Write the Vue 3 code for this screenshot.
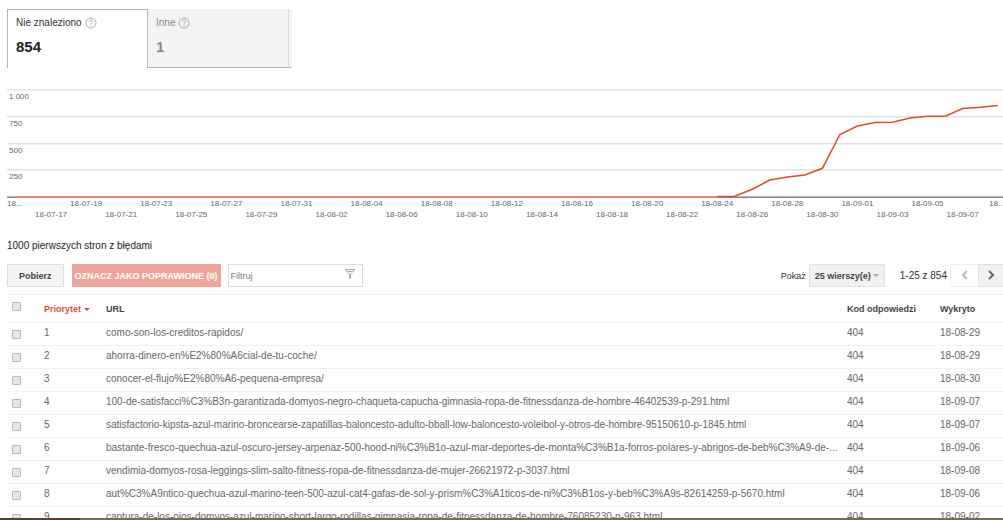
<script setup>
import { ref, computed } from 'vue'

const tabs = [
  { label: 'Nie znaleziono', count: '854', active: true },
  { label: 'Inne', count: '1', active: false }
]

const step = 17.53
const firstX = 9
const days = 57

const grid = [
  { y: 3, label: '1 000' },
  { y: 30, label: '750' },
  { y: 57, label: '500' },
  { y: 83, label: '250' }
]

const dates = Array.from({ length: days }, (_, i) => {
  const d = new Date(Date.UTC(2018, 6, 15 + i))
  return d.toISOString().slice(2, 10)
})

const ticks = computed(() =>
  dates
    .map((text, i) => ({ text, i, x: firstX + i * step, y: i % 4 === 0 ? 119 : 130 }))
    .filter((t) => t.i % 2 === 0 && t.i > 0 && t.i < days - 1)
)

const tail = [109.5, 109.3, 102.3, 93, 90, 88, 81.3, 47.5, 39, 35.5, 35.3, 31, 29.3, 29.3, 21.5, 20.2, 18.5]
const line = computed(() =>
  tail.map((y, i) => `${(firstX + (40 + i) * step).toFixed(1)},${y}`).join(' ')
)

const filter = ref('')
const rows = [
  ['como-son-los-creditos-rapidos/', '18-08-29'],
  ['ahorra-dinero-en%E2%80%A6cial-de-tu-coche/', '18-08-29'],
  ['conocer-el-flujo%E2%80%A6-pequena-empresa/', '18-08-30'],
  ['100-de-satisfacci%C3%B3n-garantizada-domyos-negro-chaqueta-capucha-gimnasia-ropa-de-fitnessdanza-de-hombre-46402539-p-291.html', '18-09-07'],
  ['satisfactorio-kipsta-azul-marino-broncearse-zapatillas-baloncesto-adulto-bball-low-baloncesto-voleibol-y-otros-de-hombre-95150610-p-1845.html', '18-09-07'],
  ['bastante-fresco-quechua-azul-oscuro-jersey-arpenaz-500-hood-ni%C3%B1o-azul-mar-deportes-de-monta%C3%B1a-forros-polares-y-abrigos-de-beb%C3%A9-de-...', '18-09-06'],
  ['vendimia-domyos-rosa-leggings-slim-salto-fitness-ropa-de-fitnessdanza-de-mujer-26621972-p-3037.html', '18-09-08'],
  ['aut%C3%A9ntico-quechua-azul-marino-teen-500-azul-cat4-gafas-de-sol-y-prism%C3%A1ticos-de-ni%C3%B1os-y-beb%C3%A9s-82614259-p-5670.html', '18-09-06'],
  ['captura-de-los-ojos-domyos-azul-marino-short-largo-rodillas-gimnasia-ropa-de-fitnessdanza-de-hombre-76085230-p-963.html', '18-09-02']
]
</script>

<template>
  <div class="page">
    <main class="content">
      <nav class="tabs">
        <button v-for="t in tabs" :key="t.label" type="button" class="tab" :class="{ active: t.active }">
          <span class="tab-label">
            {{ t.label }}
            <svg class="help" viewBox="0 0 12 12" aria-hidden="true">
              <circle cx="6" cy="6" r="5" />
              <path d="M4.3 4.8C4.3 2.6 7.7 2.6 7.7 4.6C7.7 5.8 6 5.8 6 7.2M6 8.2V9.2" />
            </svg>
          </span>
          <strong>{{ t.count }}</strong>
        </button>
        <span class="tab-end"></span>
      </nav>

      <svg class="chart" viewBox="0 0 996 140" role="img" aria-label="Wykres">
        <g v-for="g in grid" :key="g.y">
          <rect class="grid" x="0" :y="g.y - 1" width="996" height="1" />
          <rect class="grid soft" x="0" :y="g.y" width="996" height="1" />
          <text class="value" x="2" :y="g.y + 9">{{ g.label }}</text>
        </g>
        <rect class="axis" x="0" y="109" width="996" height="1" />
        <rect class="axis soft" x="0" y="110" width="996" height="1" />
        <rect class="flat" x="9" y="109" width="702" height="2" />
        <polyline class="line" :points="line" />
        <text class="tick start" x="0" y="119">18...</text>
        <text v-for="t in ticks" :key="t.text" class="tick" :x="t.x" :y="t.y">{{ t.text }}</text>
        <text class="tick start" x="982" y="119">18...</text>
      </svg>

      <h2>1000 pierwszych stron z błędami</h2>

      <div class="toolbar">
        <button type="button" class="btn">Pobierz</button>
        <button type="button" class="btn fixed">OZNACZ JAKO POPRAWIONE (0)</button>
        <label class="filter">
          <input v-model="filter" type="text" placeholder="Filtruj" aria-label="Filtruj" />
          <svg viewBox="0 0 12 12" aria-hidden="true">
            <path class="rim" d="M1 1.5H11" />
            <path d="M1.5 2L6 6.5L10.5 2M3.5 3.5H8.5" />
            <path class="stem" d="M6 6V11" />
          </svg>
        </label>
        <span class="spacer"></span>
        <label class="show" for="rows">Pokaż</label>
        <span class="select">
          <select id="rows">
            <option>25 wierszy(e)</option>
          </select>
        </span>
        <span class="range">1-25 z 854</span>
        <button type="button" class="pager off" aria-label="Poprzednia">
          <svg viewBox="0 0 8 10"><path d="M6 1L2 5L6 9" /></svg>
        </button>
        <button type="button" class="pager next" aria-label="Następna">
          <svg viewBox="0 0 8 10"><path d="M2 1L6 5L2 9" /></svg>
        </button>
      </div>

      <table>
        <colgroup>
          <col class="c-check" />
          <col class="c-prio" />
          <col />
          <col class="c-code" />
          <col class="c-date" />
        </colgroup>
        <thead>
          <tr>
            <th><input type="checkbox" aria-label="Zaznacz wszystko" /></th>
            <th class="sorted">Priorytet <i class="caret"></i></th>
            <th>URL</th>
            <th>Kod odpowiedzi</th>
            <th>Wykryto</th>
          </tr>
        </thead>
        <tbody>
          <tr v-for="(r, i) in rows" :key="i">
            <td class="check"><input type="checkbox" :aria-label="`Zaznacz ${i + 1}`" /></td>
            <td>{{ i + 1 }}</td>
            <td class="url">{{ r[0] }}</td>
            <td>404</td>
            <td>{{ r[1] }}</td>
          </tr>
        </tbody>
      </table>
    </main>
    <footer class="strip"><span></span></footer>
  </div>
</template>

<style>
html,
body {
  background: #fff;
}
</style>

<style scoped>
.page {
  display: flex;
  flex-direction: column;
  height: 100vh;
  overflow: hidden;
  color: #333;
  font: 10px/14px "Liberation Sans", Arial, sans-serif;
}
.content {
  flex: 1;
  min-height: 0;
  overflow: hidden;
  padding: 9px 0 0 7px;
}
button,
input,
select {
  font: inherit;
  color: inherit;
}
.tabs {
  display: flex;
}
.tab {
  display: flex;
  flex-direction: column;
  align-items: flex-start;
  gap: 8px;
  width: 140px;
  height: 59px;
  padding: 6px 8px;
  border: 0;
  border-top: 1px solid #f0f0f0;
  border-bottom: 1px solid #b5b5b5;
  background: #f4f4f4;
  color: #888;
  text-align: left;
}
.tab.active {
  width: 141px;
  border: 1px solid #b5b5b5;
  border-bottom: 0;
  background: #fff;
  color: #333;
}
.tab-label {
  display: flex;
  align-items: center;
  gap: 3px;
}
.tab strong {
  font-size: 15px;
  line-height: 18px;
}
.tab.active strong {
  color: #222;
}
.help {
  width: 12px;
  height: 12px;
  fill: none;
  stroke: #aaa;
}
.tab-end {
  width: 4px;
  border-left: 1px solid #ddd;
  border-bottom: 1px solid #b5b5b5;
  background: #f4f4f4;
  box-sizing: border-box;
}
.chart {
  display: block;
  width: 100%;
  margin-top: 19px;
}
.grid {
  fill: #e2e2e2;
}
.grid.soft {
  fill: #f0f0f0;
}
.axis {
  fill: #bbb;
}
.axis.soft {
  fill: #888;
}
.flat {
  fill: #ea8672;
}
.line {
  fill: none;
  stroke: #e34a2b;
  stroke-width: 1.6;
}
.value,
.tick {
  fill: #666;
  font-size: 8px;
}
.tick {
  text-anchor: middle;
}
.tick.start {
  text-anchor: start;
}
h2 {
  margin: 11px 0 10px;
  font-size: 10px;
  font-weight: 400;
  line-height: 16px;
  color: #222;
}
.toolbar {
  display: flex;
  align-items: center;
  height: 23px;
}
.btn {
  height: 23px;
  padding: 0 11px;
  border: 1px solid #dcdcdc;
  border-radius: 1px;
  background: #f4f4f4;
  color: #444;
  font-size: 9px;
  font-weight: 700;
}
.btn.fixed {
  margin: 0 7px 0 8px;
  padding: 0 2px;
  border-color: #eea69c;
  background: #eea69c;
  color: #fff;
}
.filter {
  display: flex;
  align-items: center;
  box-sizing: border-box;
  width: 135px;
  height: 23px;
  padding: 0 6px 0 2px;
  border: 1px solid #ddd;
}
.filter input {
  flex: 1;
  min-width: 0;
  padding: 0;
  border: 0;
  outline: 0;
  background: none;
  font-size: 9px;
}
.filter input::placeholder {
  color: #777;
  opacity: 1;
}
.filter svg {
  width: 12px;
  height: 12px;
  margin-bottom: 4px;
  fill: none;
  stroke: #aaa;
}
.filter .rim {
  stroke-width: 1;
}
.filter .stem {
  stroke-width: 2;
}
.spacer {
  flex: 1;
}
.show {
  font-size: 9px;
  margin-right: 3px;
}
.select {
  position: relative;
}
.select select {
  display: block;
  appearance: none;
  width: 76px;
  height: 23px;
  padding: 0 5px;
  border: 1px solid #e0e0e0;
  border-radius: 1px;
  background: #f1f1f1;
  color: #444;
  font-size: 9px;
  font-weight: 700;
}
.select::after {
  content: "";
  position: absolute;
  top: 10px;
  right: 6px;
  border: 3px solid transparent;
  border-top-color: #aaa;
  border-bottom: 0;
}
.range {
  margin: 0 3px 0 15px;
}
.pager {
  width: 28px;
  height: 23px;
  padding: 0;
  border: 1px solid #e0e0e0;
  background: #f1f1f1;
}
.pager.off {
  border-color: #eee;
  border-right: 0;
  background: #fff;
}
.pager.next {
  width: 25px;
  border-right: 0;
}
.pager svg {
  display: block;
  width: 8px;
  height: 10px;
  margin: 0 auto 2px;
  fill: none;
  stroke: #666;
  stroke-width: 2;
}
.pager.off svg {
  stroke: #bbb;
}
table {
  width: 100%;
  margin-top: 7px;
  table-layout: fixed;
  border-collapse: collapse;
}
.c-check {
  width: 37px;
}
.c-prio {
  width: 62px;
}
.c-code {
  width: 93px;
}
.c-date {
  width: 63px;
}
th,
td {
  box-sizing: border-box;
  height: 23px;
  padding: 0 0 3px;
  border-top: 1px solid #f0f0f0;
  text-align: left;
  white-space: nowrap;
  color: #666;
}
th {
  height: 28px;
  padding: 0;
  font-size: 9px;
  color: #444;
}
td.check {
  padding: 0;
}
th input[type="checkbox"] {
  margin-bottom: 4px;
}
.sorted {
  color: #dd4b39;
}
.caret {
  display: inline-block;
  margin: 0 0 1px;
  border: 3px solid transparent;
  border-top-color: #dd4b39;
  border-bottom: 0;
}
td.url {
  overflow: hidden;
  padding-right: 4px;
  text-overflow: ellipsis;
}
input[type="checkbox"] {
  appearance: none;
  display: block;
  box-sizing: border-box;
  width: 9px;
  height: 9px;
  margin: 0 0 0 5px;
  border: 1px solid #b8b8b8;
  border-radius: 1px;
  background: #e6e6e6;
}
.strip {
  height: 2px;
  background: #7a6a58;
}
.strip span {
  display: block;
  width: 8%;
  height: 2px;
  background: #54402f;
}
</style>
